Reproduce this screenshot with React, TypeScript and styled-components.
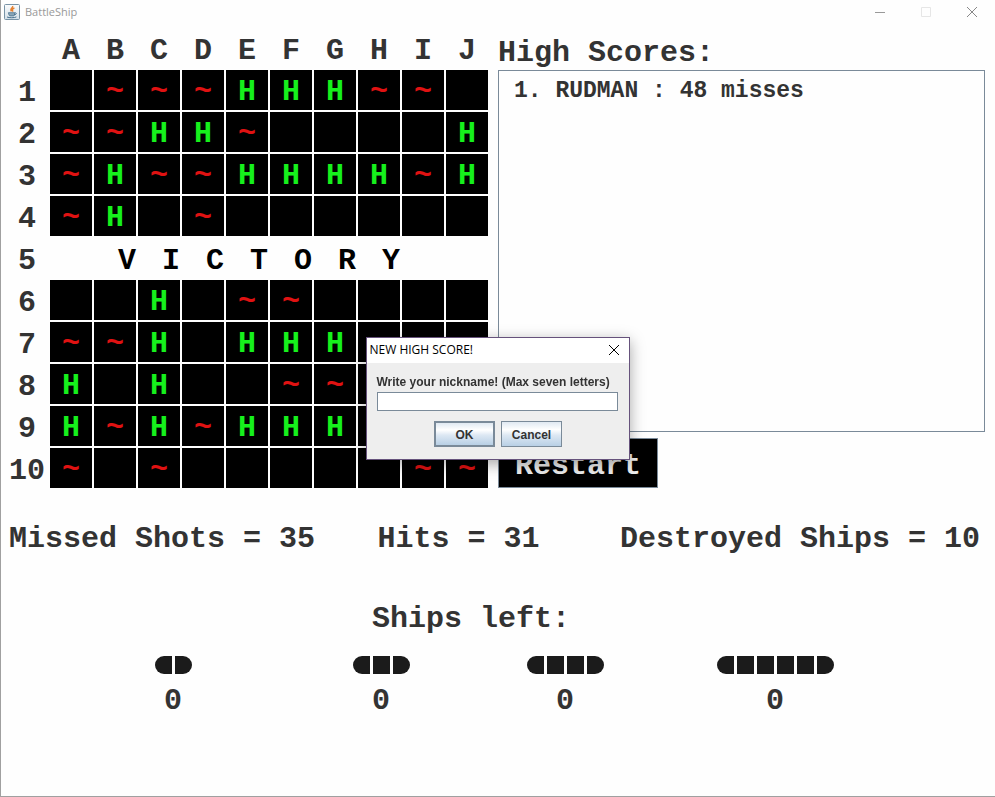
import React from "react";
import styled, { createGlobalStyle } from "styled-components";

const GlobalStyle = createGlobalStyle`
  *, *::before, *::after { box-sizing: border-box; }
  body {
    margin: 0;
    background: #fefefe;
    color: #333333;
    font-family: "Courier New", "Liberation Mono", monospace;
    font-size: 30px;
    font-weight: bold;
    line-height: 40px;
  }
  button, input { font: inherit; color: inherit; margin: 0; }
`;

const AppWindow = styled.div`
  display: flex;
  flex-direction: column;
  min-height: 100vh;
  border-left: 1px solid #a0a0a0;
  border-bottom: 1px solid #a0a0a0;
`;

const TitleBar = styled.header`
  display: flex;
  align-items: center;
  height: 24px;
  padding-left: 3px;
  gap: 5px;
  font: 12px/16px "Open Sans", sans-serif;
  color: #999999;
`;

const WindowTitle = styled.h1`
  flex: 1;
  margin: 0;
  font: 11px/16px "Open Sans", sans-serif;
`;

const WindowControl = styled.button`
  display: grid;
  place-items: center;
  width: 46px;
  height: 24px;
  padding: 0;
  border: 0;
  background: none;
`;

const Controls = styled.div`
  display: flex;
`;

const Main = styled.main`
  display: grid;
  grid-template-columns: auto minmax(0, 1fr);
  column-gap: 10px;
  padding: 6px 10px 0 0;
`;

const Board = styled.div`
  display: grid;
  grid-template-columns: 47px repeat(10, 42px);
  grid-template-rows: 38px repeat(10, 40px);
  gap: 2px;
`;

const Heading = styled.span`
  padding-top: 1px;
  text-align: center;
`;

const RowLabel = styled.span`
  padding-top: 3px;
  padding-left: 5px;
  text-align: center;
`;

const Cell = styled.button<{ $hit: boolean }>`
  padding: 5px 0 0;
  border: 0;
  background: #000000;
  color: ${(p) => (p.$hit ? "#16f01c" : "#e01212")};
  line-height: 35px;
  text-align: center;
`;

const Victory = styled.div`
  grid-column: 2 / -1;
  display: grid;
  grid-template-columns: repeat(7, 44px);
  padding-top: 3px;
  padding-left: 55px;
  color: #000000;
  text-align: center;
`;

const Side = styled.section`
  display: flex;
  flex-direction: column;
  align-items: flex-start;
`;

const SideTitle = styled.h2`
  margin: 0;
  padding-top: 3px;
  height: 40px;
  font: inherit;
`;

const ScoreList = styled.ol`
  flex: 1;
  align-self: stretch;
  margin: 0 0 6px;
  padding: 5px 15px;
  border: 1px solid #7a8a99;
  list-style: none;
  font-size: 23px;
  line-height: 30px;
`;

const Restart = styled.button`
  width: 160px;
  height: 50px;
  padding: 5px 0 0;
  border: 1px solid #7a8a99;
  background: #000000;
  color: #eeeeee;
`;

const Stats = styled.section`
  display: flex;
  justify-content: space-between;
  padding: 31px 15px 0 8px;
  white-space: nowrap;
`;

const Stat = styled.span`
  &:nth-child(2) { padding-right: 18px; }
`;

const Fleet = styled.section`
  display: grid;
  grid-template-columns: 208fr 208fr 160fr 260fr;
  justify-items: center;
  padding: 40px 90px 0 68px;
`;

const FleetTitle = styled.h2`
  grid-column: 1 / -1;
  justify-self: center;
  margin: 0;
  padding: 0 32px 17px 0;
  font: inherit;
`;

const Ship = styled.div`
  display: flex;
  flex-direction: column;
  align-items: center;
  gap: 7px;
`;

const Hull = styled.div`
  display: flex;
  gap: 3px;
`;

const Segment = styled.span`
  width: 17px;
  height: 18px;
  background: #1b1b1b;
  &:first-child { border-radius: 9px 0 0 9px; }
  &:last-child { border-radius: 0 9px 9px 0; }
`;

const Overlay = styled.div`
  position: fixed;
  inset: 0;
  display: grid;
  place-items: center;
`;

const Dialog = styled.form`
  width: 264px;
  border: 1px solid #66527c;
  background: #eeeeee;
  box-shadow: 0 4px 14px rgba(0, 0, 0, 0.35);
  font: bold 12px/16px "Liberation Sans", Arial, sans-serif;
`;

const DialogBar = styled.div`
  display: flex;
  align-items: center;
  justify-content: space-between;
  height: 25px;
  padding: 0 0 1px 3px;
  background: #ffffff;
  color: #000000;
  font: 12px/16px "Open Sans", sans-serif;
`;

const DialogClose = styled(WindowControl)`
  width: 30px;
`;

const DialogBody = styled.div`
  display: flex;
  flex-direction: column;
  padding: 11px 11px 12px 10px;
`;

const Nickname = styled.input`
  width: 100%;
  height: 19px;
  margin-top: 2px;
  padding: 0 3px;
  border: 1px solid #7a8a99;
  border-radius: 0;
  background: #ffffff;
  outline: none;
`;

const Actions = styled.div`
  display: flex;
  justify-content: center;
  gap: 6px;
  margin-top: 10px;
  padding-left: 2px;
`;

const ActionButton = styled.button<{ $primary?: boolean }>`
  width: 61px;
  height: 26px;
  padding: 1px 0 0;
  border: ${(p) => (p.$primary ? 2 : 1)}px solid #7a8a99;
  background: linear-gradient(#e0e9f2 0%, #ffffff 32%, #dde8f3 55%, #b8cfe5 100%);
`;

const COLUMNS = "ABCDEFGHIJ".split("");

const ROWS = [
  " ~~~HHH~~ ",
  "~~HH~    H",
  "~H~~HHHH~H",
  "~H ~      ",
  null,
  "  H ~~    ",
  "~~H HHH   ",
  "H H  ~~   ",
  "H~H~HHH   ",
  "~ ~     ~~",
];

const SHIPS = [
  { size: 2, left: 0 },
  { size: 3, left: 0 },
  { size: 4, left: 0 },
  { size: 6, left: 0 },
];

const JavaIcon = () => (
  <svg width="16" height="16" viewBox="0 0 16 16" fill="none" aria-hidden="true">
    <defs>
      <linearGradient id="tile" x1="0" y1="0" x2="0" y2="1">
        <stop offset="0" stopColor="#fbfcfd" />
        <stop offset="1" stopColor="#d3e0e9" />
      </linearGradient>
    </defs>
    <rect x=".5" y=".5" width="15" height="15" rx="1" fill="url(#tile)" stroke="#7893a6" />
    <path d="M8.6 2c1 1.8-3.3 2.8-1.2 5.4M10.4 3.9C8 5.2 8 6 9 7.6" stroke="#e57f2e" strokeWidth="1.4" />
    <path d="M4.4 8.7h6.3c0 2-.5 3.2-1.2 3.2H6c-.8 0-1.3-1.6-1.6-3.2z" fill="#8ba6b8" stroke="#48718e" strokeWidth=".8" />
    <path d="M10.8 8.9c2.2-.5 2.2 1.8-.8 2M3 13c2 1 7.6 1 9.4-.1" stroke="#48718e" />
  </svg>
);

const CloseIcon = ({ color }: { color: string }) => (
  <svg width="12" height="12" viewBox="0 0 12 12" stroke={color} aria-hidden="true">
    <path d="M1 1l10 10M11 1L1 11" />
  </svg>
);

export default function App() {
  return (
    <>
      <GlobalStyle />
      <AppWindow>
        <TitleBar>
          <JavaIcon />
          <WindowTitle>BattleShip</WindowTitle>
          <Controls>
            <WindowControl aria-label="Minimize">
              <svg width="10" height="10" stroke="#999999"><path d="M0 5.5h10" /></svg>
            </WindowControl>
            <WindowControl aria-label="Maximize" disabled>
              <svg width="10" height="10" fill="none" stroke="#e6e6e6"><path d="M.5.5h9v9h-9z" /></svg>
            </WindowControl>
            <WindowControl aria-label="Close">
              <CloseIcon color="#888888" />
            </WindowControl>
          </Controls>
        </TitleBar>
        <Main>
          <Board>
            <span />
            {COLUMNS.map((c) => (
              <Heading key={c}>{c}</Heading>
            ))}
            {ROWS.map((row, r) => (
              <React.Fragment key={r}>
                <RowLabel>{r + 1}</RowLabel>
                {row === null ? (
                  <Victory>
                    {"VICTORY".split("").map((l) => (
                      <span key={l}>{l}</span>
                    ))}
                  </Victory>
                ) : (
                  row.split("").map((mark, c) => (
                    <Cell key={c} $hit={mark === "H"} aria-label={`${COLUMNS[c]}${r + 1}`}>
                      {mark.trim()}
                    </Cell>
                  ))
                )}
              </React.Fragment>
            ))}
          </Board>
          <Side>
            <SideTitle>High Scores:</SideTitle>
            <ScoreList>
              <li>1. RUDMAN : 48 misses</li>
            </ScoreList>
            <Restart>Restart</Restart>
          </Side>
        </Main>
        <Stats>
          <Stat>Missed Shots = 35</Stat>
          <Stat>Hits = 31</Stat>
          <Stat>Destroyed Ships = 10</Stat>
        </Stats>
        <Fleet>
          <FleetTitle>Ships left:</FleetTitle>
          {SHIPS.map((ship) => (
            <Ship key={ship.size}>
              <Hull>
                {Array.from({ length: ship.size }, (_, i) => (
                  <Segment key={i} />
                ))}
              </Hull>
              <span>{ship.left}</span>
            </Ship>
          ))}
        </Fleet>
      </AppWindow>
      <Overlay>
        <Dialog role="dialog" aria-labelledby="dialog-title" onSubmit={(e) => e.preventDefault()}>
          <DialogBar>
            <span id="dialog-title">NEW HIGH SCORE!</span>
            <DialogClose type="button" aria-label="Close dialog">
              <CloseIcon color="#000000" />
            </DialogClose>
          </DialogBar>
          <DialogBody>
            <label htmlFor="nickname">Write your nickname! (Max seven letters)</label>
            <Nickname id="nickname" type="text" maxLength={7} />
            <Actions>
              <ActionButton type="submit" $primary>OK</ActionButton>
              <ActionButton type="button">Cancel</ActionButton>
            </Actions>
          </DialogBody>
        </Dialog>
      </Overlay>
    </>
  );
}
